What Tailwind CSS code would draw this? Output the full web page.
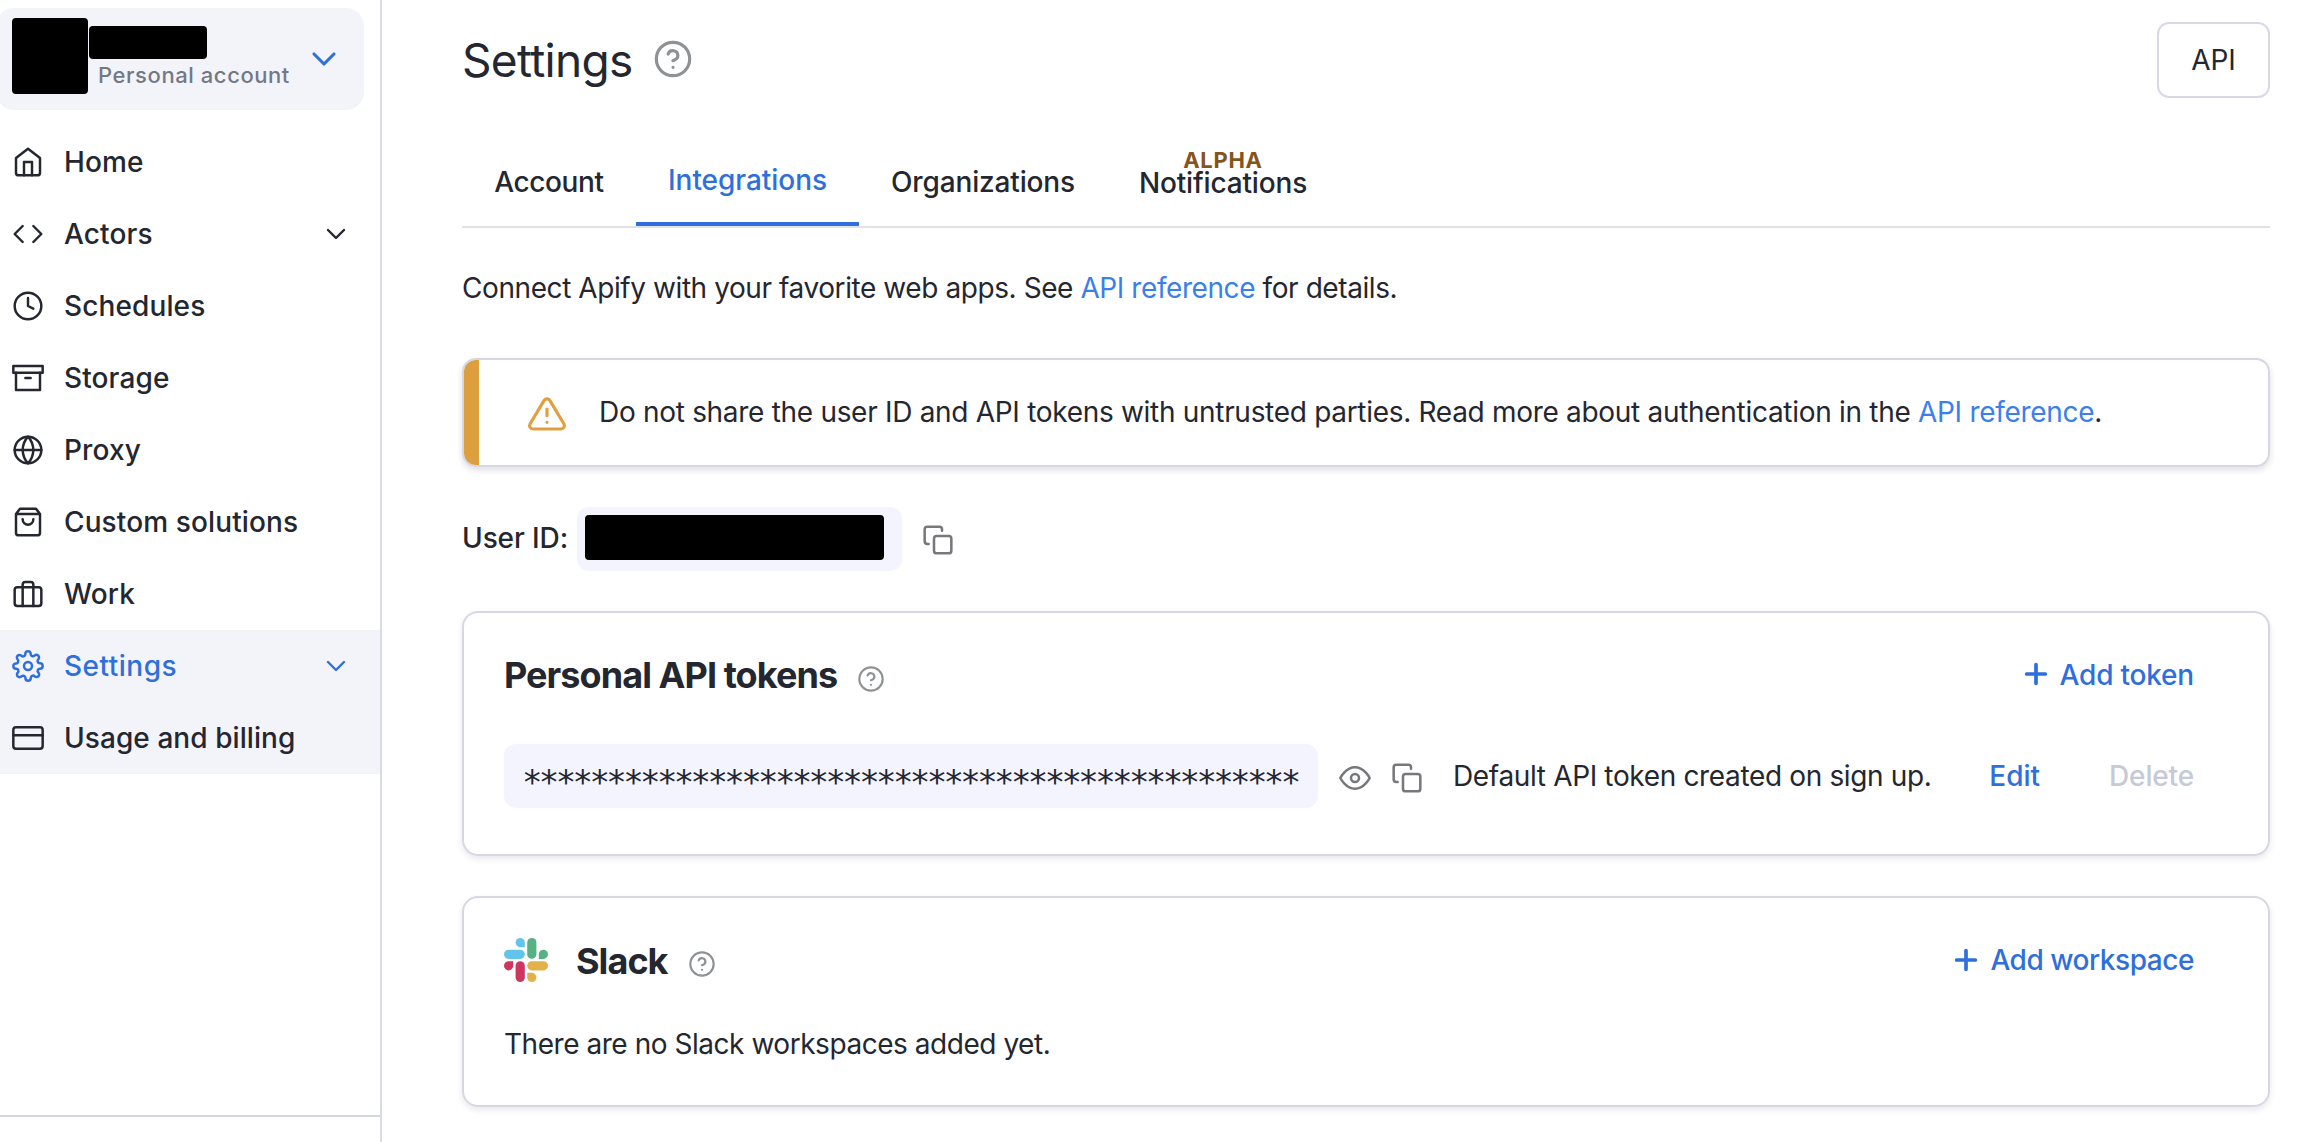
<!DOCTYPE html>
<html lang="en">
<head>
<meta charset="utf-8">
<title>Settings</title>
<script src="https://cdn.jsdelivr.net/npm/@tailwindcss/browser@4"></script>
</head>
<body class="bg-white font-['Inter',sans-serif] text-[28px] leading-10 text-[#242630] overflow-hidden">
<svg class="hidden">
  <symbol id="chevron" viewBox="0 0 24 24"><path d="M6 9l6 6 6-6"/></symbol>
  <symbol id="help" viewBox="0 0 24 24"><circle cx="12" cy="12" r="10"/><path d="M9.09 9a3 3 0 0 1 5.83 1c0 2-3 3-3 3M12 17h.01"/></symbol>
  <symbol id="copy" viewBox="0 0 24 24"><rect x="9" y="9" width="13" height="13" rx="2"/><path d="M5 15H4a2 2 0 0 1-2-2V4a2 2 0 0 1 2-2h9a2 2 0 0 1 2 2v1"/></symbol>
  <symbol id="plus" viewBox="0 0 24 24"><path d="M12 5v14M5 12h14"/></symbol>
</svg>
<div class="flex h-[1142px] w-[2314px]">
  <aside class="flex w-[382px] shrink-0 flex-col border-r-2 border-[#d8d9ec] pt-2">
    <div class="-ml-1 flex h-[102px] w-[368px] shrink-0 rounded-[18px] bg-[#f3f4fa] pl-4 pt-[10px]">
      <div class="size-[76px] shrink-0 rounded bg-black"></div>
      <div class="ml-px w-[220px] pt-2">
        <div class="h-[33px] w-[118px] rounded bg-black"></div>
        <div class="pl-[9px] text-[22px] font-medium leading-8 tracking-[0.57px] text-[#737885]">Personal account</div>
      </div>
      <svg class="-ml-[5px] mt-[21px] size-10 shrink-0 fill-none stroke-[#2f6fdb] stroke-[1.9] [stroke-linecap:round] [stroke-linejoin:round]"><use href="#chevron"/></svg>
    </div>
    <nav class="mt-4 grid shrink-0 auto-rows-[72px] font-medium tracking-[0.12px] [&_svg]:size-8 [&_svg]:shrink-0 [&_svg]:fill-none [&_svg]:stroke-current [&_svg]:stroke-[1.85] [&_svg]:[stroke-linecap:round] [&_svg]:[stroke-linejoin:round]">
      <a class="flex items-center gap-5 pl-3"><svg viewBox="0 0 24 24"><path d="M3 9l9-7 9 7v11a2 2 0 0 1-2 2H5a2 2 0 0 1-2-2z"/><path d="M9 22V12h6v10"/></svg><span>Home</span></a>
      <a class="flex items-center gap-5 pl-3"><svg viewBox="0 0 24 24"><path d="M16 18l6-6-6-6M8 6l-6 6 6 6"/></svg><span>Actors</span><svg class="ml-auto mr-7"><use href="#chevron"/></svg></a>
      <a class="flex items-center gap-5 pl-3"><svg viewBox="0 0 24 24"><circle cx="12" cy="12" r="10"/><path d="M12 6v6l4 2"/></svg><span>Schedules</span></a>
      <a class="flex items-center gap-5 pl-3"><svg viewBox="0 0 24 24"><path d="M21 8v13H3V8"/><rect x="1" y="3" width="22" height="5"/><path d="M10 12h4"/></svg><span>Storage</span></a>
      <a class="flex items-center gap-5 pl-3"><svg viewBox="0 0 24 24"><circle cx="12" cy="12" r="10"/><path d="M2 12h20M12 2a15.3 15.3 0 0 1 4 10 15.3 15.3 0 0 1-4 10 15.3 15.3 0 0 1-4-10 15.3 15.3 0 0 1 4-10z"/></svg><span>Proxy</span></a>
      <a class="flex items-center gap-5 pl-3"><svg viewBox="0 0 24 24"><path d="M6 2L3 6v14a2 2 0 0 0 2 2h14a2 2 0 0 0 2-2V6l-3-4zM3 6h18M16 10a4 4 0 0 1-8 0"/></svg><span>Custom solutions</span></a>
      <a class="flex items-center gap-5 pl-3"><svg viewBox="0 0 24 24"><rect x="2" y="7" width="20" height="14" rx="2"/><path d="M16 21V5a2 2 0 0 0-2-2h-4a2 2 0 0 0-2 2v16"/></svg><span>Work</span></a>
      <a class="flex items-center gap-5 bg-[#f3f4fa] pl-3 tracking-[0.5px] text-[#2f6fdb]"><svg viewBox="0 0 24 24"><circle cx="12" cy="12" r="3"/><path d="M19.4 15a1.65 1.65 0 0 0 .33 1.82l.06.06a2 2 0 0 1 0 2.83 2 2 0 0 1-2.83 0l-.06-.06a1.65 1.65 0 0 0-1.82-.33 1.65 1.65 0 0 0-1 1.51V21a2 2 0 0 1-2 2 2 2 0 0 1-2-2v-.09A1.65 1.65 0 0 0 9 19.4a1.65 1.65 0 0 0-1.82.33l-.06.06a2 2 0 0 1-2.83 0 2 2 0 0 1 0-2.83l.06-.06a1.65 1.65 0 0 0 .33-1.82 1.65 1.65 0 0 0-1.51-1H3a2 2 0 0 1-2-2 2 2 0 0 1 2-2h.09A1.65 1.65 0 0 0 4.6 9a1.65 1.65 0 0 0-.33-1.82l-.06-.06a2 2 0 0 1 0-2.83 2 2 0 0 1 2.83 0l.06.06a1.65 1.65 0 0 0 1.82.33H9a1.65 1.65 0 0 0 1-1.51V3a2 2 0 0 1 2-2 2 2 0 0 1 2 2v.09a1.65 1.65 0 0 0 1 1.51 1.65 1.65 0 0 0 1.82-.33l.06-.06a2 2 0 0 1 2.83 0 2 2 0 0 1 0 2.83l-.06.06a1.65 1.65 0 0 0-.33 1.82V9a1.65 1.65 0 0 0 1.51 1H21a2 2 0 0 1 2 2 2 2 0 0 1-2 2h-.09a1.65 1.65 0 0 0-1.51 1z"/></svg><span>Settings</span><svg class="ml-auto mr-7"><use href="#chevron"/></svg></a>
      <a class="flex items-center gap-5 bg-[#f3f4fa] pl-3 tracking-[0.07px]"><svg viewBox="0 0 24 24"><rect x="1" y="4" width="22" height="16" rx="2"/><path d="M1 10h22"/></svg><span>Usage and billing</span></a>
    </nav>
    <div class="mt-auto h-[27px] border-t-2 border-[#d3d6da]"></div>
  </aside>

  <main class="flex min-w-0 flex-1 flex-col pl-20 pr-11 pt-[22px]">
    <header class="flex h-[76px] items-center">
      <h1 class="text-[46px] leading-[56px] tracking-[-0.7px]">Settings</h1>
      <svg class="ml-5 -mt-0.5 size-10 fill-none stroke-[#8f9295] stroke-[1.9] [stroke-linecap:round] [stroke-linejoin:round]"><use href="#help"/></svg>
      <button class="ml-auto h-[76px] w-[113px] rounded-xl border-2 border-[#d8d9e6]">API</button>
    </header>
    <nav class="flex h-[130px] shrink-0 items-end border-b-2 border-[#e1e2e6] font-medium tracking-[-0.15px]">
      <a class="flex h-[88px] w-[174px] items-center justify-center tracking-[-0.4px]">Account</a>
      <a class="flex h-[88px] w-[223px] items-center justify-center border-b-4 border-[#2f6fdb] tracking-[-0.05px] text-[#2f6fdb]">Integrations</a>
      <a class="flex h-[88px] w-[248px] items-center justify-center">Organizations</a>
      <a class="flex h-[88px] w-[232px] flex-col items-center pt-[11px]"><span class="text-[22px] font-bold leading-[22px] tracking-[0.7px] text-[#85541c]">ALPHA</span><span class="leading-6">Notifications</span></a>
    </nav>
    <p class="mt-10 tracking-[-0.42px]">Connect Apify with your favorite web apps. See <a class="text-[#3b7feb]">API reference</a> for details.</p>

    <section class="mt-[50px] flex h-[109px] shrink-0 items-center overflow-hidden rounded-[14px] border-2 border-[#d6d7e5] shadow-[0_3px_6px_rgba(30,30,60,0.14)]">
      <div class="h-full w-[15px] bg-[#dd9e3e]"></div>
      <svg viewBox="0 0 24 24" class="ml-12 mt-0.5 size-10 fill-none stroke-[#e0a042] stroke-[1.9] [stroke-linecap:round] [stroke-linejoin:round]"><path d="M10.29 3.86L1.82 18a2 2 0 0 0 1.71 3h16.94a2 2 0 0 0 1.71-3L13.71 3.86a2 2 0 0 0-3.42 0zM12 9v4M12 17h.01"/></svg>
      <p class="-mt-0.5 ml-8 tracking-[-0.3px]">Do not share the user ID and API tokens with untrusted parties. Read more about authentication in the <a class="text-[#3b7feb]">API reference</a>.</p>
    </section>

    <div class="mt-10 flex h-16 shrink-0 items-center">
      <span class="-mt-0.5 font-medium tracking-[-0.1px]">User ID:</span>
      <div class="ml-[9px] flex h-16 w-[325px] items-center rounded-xl bg-[#f3f4fd] pl-2"><div class="-mt-[3px] h-[45px] w-[299px] rounded bg-black"></div></div>
      <svg class="ml-5 mt-0.5 size-8 fill-none stroke-[#77787c] stroke-[1.9] [stroke-linecap:round] [stroke-linejoin:round]"><use href="#copy"/></svg>
    </div>

    <section class="mt-10 h-[245px] shrink-0 rounded-[16px] border-2 border-[#d6d7e3] pl-10 pr-[74px] pt-10 shadow-[0_3px_6px_rgba(30,30,60,0.10)]">
      <div class="flex h-11 items-center">
        <h2 class="text-4xl font-bold tracking-[-0.93px]">Personal API tokens</h2>
        <svg class="ml-5 mt-2 size-7 fill-none stroke-[#8f9295] stroke-[1.85] [stroke-linecap:round] [stroke-linejoin:round]"><use href="#help"/></svg>
        <a class="ml-auto flex items-center gap-2 font-medium tracking-[-0.2px] text-[#2f6fdb]"><svg class="-mt-0.5 size-8 fill-none stroke-current stroke-[2.8] [stroke-linecap:round]"><use href="#plus"/></svg>Add token</a>
      </div>
      <div class="mt-[47px] flex h-16 items-center">
        <div class="h-16 w-[814px] shrink-0 whitespace-nowrap rounded-xl bg-[#f3f4fd] pl-[18px] font-['DejaVu_Sans_Mono',monospace] text-[34px] leading-[76px] tracking-[-3.61px]">**********************************************</div>
        <svg viewBox="0 0 24 24" class="ml-[21px] mt-1 size-8 fill-none stroke-[#77787c] stroke-[1.9] [stroke-linecap:round] [stroke-linejoin:round]"><path d="M1 12s4-8 11-8 11 8 11 8-4 8-11 8-11-8-11-8z"/><circle cx="12" cy="12" r="3"/></svg>
        <svg class="ml-5 mt-1 size-8 fill-none stroke-[#77787c] stroke-[1.9] [stroke-linecap:round] [stroke-linejoin:round]"><use href="#copy"/></svg>
        <span class="ml-[30px] tracking-[-0.35px]">Default API token created on sign up.</span>
        <a class="ml-auto font-medium text-[#2f6fdb]">Edit</a>
        <a class="ml-[69px] font-medium tracking-[-0.15px] text-[#c6c9d6]">Delete</a>
      </div>
    </section>

    <section class="mt-10 h-[211px] shrink-0 rounded-[16px] border-2 border-[#d6d7e3] pl-10 pr-[74px] pt-10 shadow-[0_3px_6px_rgba(30,30,60,0.10)]">
      <div class="flex h-11 items-center">
        <svg viewBox="0 0 44 44" class="size-11">
          <path fill="#62c4ea" d="M16.2 0a4.6 4.6 0 0 1 4.6 4.6v4.6h-4.6a4.6 4.6 0 0 1 0-9.2z"/><rect fill="#62c4ea" y="11.7" width="20.8" height="9.2" rx="4.6"/>
          <rect fill="#58b183" x="23.2" width="9.2" height="20.8" rx="4.6"/><path fill="#58b183" d="M44 16.3a4.6 4.6 0 0 1-4.6 4.6h-4.6v-4.6a4.6 4.6 0 0 1 9.2 0z"/>
          <rect fill="#e2b14c" x="23.2" y="23.2" width="20.8" height="9.2" rx="4.6"/><path fill="#e2b14c" d="M27.8 44a4.6 4.6 0 0 1-4.6-4.6v-4.6h4.6a4.6 4.6 0 0 1 0 9.2z"/>
          <rect fill="#cd365f" x="11.6" y="23.2" width="9.2" height="20.8" rx="4.6"/><path fill="#cd365f" d="M0 27.8a4.6 4.6 0 0 1 4.6-4.6h4.6v4.6a4.6 4.6 0 0 1-9.2 0z"/>
        </svg>
        <h2 class="ml-7 mt-0.5 text-4xl font-bold tracking-[-0.95px]">Slack</h2>
        <svg class="ml-5 mt-2 size-7 fill-none stroke-[#8f9295] stroke-[1.85] [stroke-linecap:round] [stroke-linejoin:round]"><use href="#help"/></svg>
        <a class="ml-auto flex items-center gap-2 font-medium tracking-[-0.45px] text-[#2f6fdb]"><svg class="size-8 fill-none stroke-current stroke-[2.8] [stroke-linecap:round]"><use href="#plus"/></svg>Add workspace</a>
      </div>
      <p class="mt-[42px] tracking-[-0.46px]">There are no Slack workspaces added yet.</p>
    </section>
  </main>
</div>
</body>
</html>
